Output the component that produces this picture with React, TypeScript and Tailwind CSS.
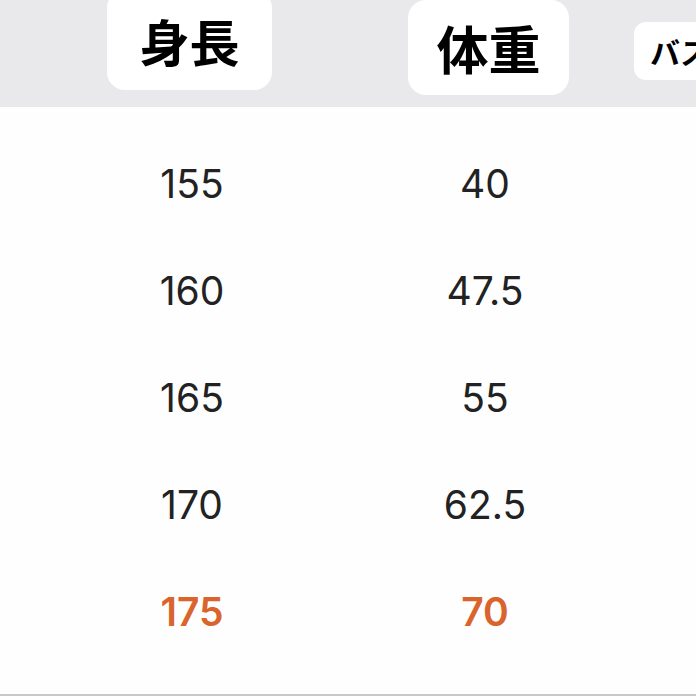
import React from "react";

const ROWS = [
  { h: "155", w: "40" },
  { h: "160", w: "47.5" },
  { h: "165", w: "55" },
  { h: "170", w: "62.5" },
  { h: "175", w: "70", hot: true },
];

const jp = { fontFamily: '"Noto Sans CJK JP", "Noto Sans", sans-serif' };
const num = { fontFamily: 'Inter, "Liberation Sans", sans-serif' };

export default function App() {
  return (
    <div className="relative w-[696px] h-[696px] overflow-hidden bg-[#fefefe]">
      {/* header band */}
      <div className="h-[107px] bg-[#e9e9eb] flex items-start pl-[107px] overflow-hidden" style={jp}>
        <div className="shrink-0 w-[165px] h-[100px] -mt-[10px] bg-white rounded-[18px] flex items-center justify-center">
          <span className="text-[50px] font-bold text-black leading-none">身長</span>
        </div>
        <div className="shrink-0 ml-[136px] w-[161px] h-[95px] bg-white rounded-[18px] flex items-center justify-center">
          <span className="text-[52px] font-bold text-black leading-none">体重</span>
        </div>
        <div className="shrink-0 ml-[65px] w-[160px] h-[58px] mt-[22px] bg-white rounded-[12px] flex items-center pl-[16px]">
          <span className="text-[30px] font-bold text-black leading-none whitespace-nowrap">バスト</span>
        </div>
      </div>

      {/* rows */}
      <div className="pt-[23px] pl-[46px]" style={num}>
        {ROWS.map((r) => (
          <div key={r.h} className="h-[107px] flex items-center">
            <div
              className={`w-[292px] text-center text-[39px] leading-none ${
                r.hot ? "text-[#d9642c] font-semibold" : "text-[#222222] font-normal"
              }`}
            >
              {r.h}
            </div>
            <div
              className={`w-[294px] text-center text-[39px] leading-none ${
                r.hot ? "text-[#d9642c] font-semibold" : "text-[#222222] font-normal"
              }`}
            >
              {r.w}
            </div>
          </div>
        ))}
      </div>

      <div className="absolute bottom-0 left-0 right-0 h-[2px] bg-[#c9c9cb]" />
    </div>
  );
}
